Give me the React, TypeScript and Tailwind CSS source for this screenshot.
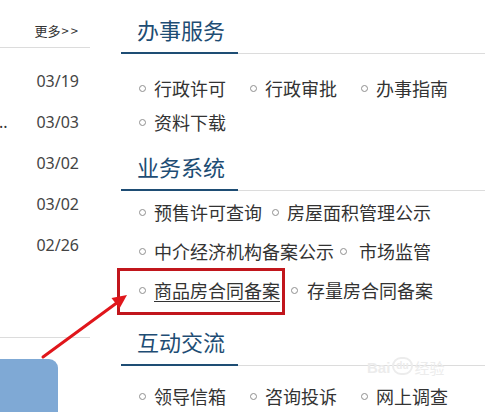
import React from "react";

const dates = ["03/19", "03/03", "03/02", "03/02", "02/26"];

function Heading({ title }: { title: string }) {
  return (
    <div className="flex h-[54px] items-end">
      <div className="h-full w-[117px] shrink-0 border-b-2 border-[#1e4d74] pl-[16px] pt-[13px] text-[22px] leading-[33px] text-[#1e4d74]">
        {title}
      </div>
      <div className="flex-1 border-b border-[#dcdcdc]" />
    </div>
  );
}

function Item({
  label,
  className = "",
  gap = "ml-[8px]",
  underline = false,
}: {
  label: string;
  className?: string;
  gap?: string;
  underline?: boolean;
}) {
  return (
    <span className={`inline-flex shrink-0 items-center ${className}`}>
      <span className="h-[7px] w-[7px] rounded-full border border-[#8f8f8f]" />
      <span className={`${gap} ${underline ? "underline decoration-1 underline-offset-[3px]" : ""}`}>
        {label}
      </span>
    </span>
  );
}

function FixedRow({ items }: { items: string[] }) {
  return (
    <div className="flex h-[34px] items-center pl-[18px] leading-[34px]">
      {items.map((it) => (
        <div key={it} className="w-[111px] shrink-0">
          <Item label={it} />
        </div>
      ))}
    </div>
  );
}

export default function App() {
  return (
    <div className="relative flex h-[412px] w-[485px] overflow-hidden bg-white font-['Microsoft_YaHei','Noto_Sans_CJK_SC','Noto_Sans',sans-serif] text-[#333]">
      {/* left news column */}
      <div className="flex w-[90px] shrink-0 flex-col">
        <div className="flex h-[54px] items-end justify-end border-b border-[#dcdcdc] pb-[8px] pr-[10px] text-[13px] leading-[17px]">
          更多<span className="ml-[1px] tracking-[2px]">&gt;&gt;</span>
        </div>
        <div className="pt-[13px]">
          {dates.map((d, i) => (
            <div
              key={i}
              className="flex h-[41px] items-center justify-between pr-[11px] font-['Noto_Sans',sans-serif] text-[16px] leading-[41px] text-[#444]"
            >
              <span className="-ml-[1px] text-[#333]">{i === 1 ? ".." : ""}</span>
              <span>{d}</span>
            </div>
          ))}
        </div>
        <div className="mt-[71px] border-t border-[#dcdcdc]" />
        <div className="mt-[21px] h-[60px] w-[58px] rounded-tr-[9px] bg-[#7fa9d5]" />
      </div>

      {/* right services column */}
      <div className="ml-[31px] flex-1 text-[18px]">
        <Heading title="办事服务" />
        <div className="pt-[15px]">
          <FixedRow items={["行政许可", "行政审批", "办事指南"]} />
          <FixedRow items={["资料下载"]} />
        </div>

        <Heading title="业务系统" />
        <div className="pl-[18px] pt-[2px]">
          <div className="flex h-[39px] items-center leading-[39px]">
            <Item label="预售许可查询" />
            <Item label="房屋面积管理公示" className="ml-[10px]" />
          </div>
          <div className="flex h-[39px] items-center leading-[39px]">
            <Item label="中介经济机构备案公示" />
            <Item label="市场监管" className="ml-[6px]" gap="ml-[12px]" />
          </div>
          <div className="flex h-[39px] items-center leading-[39px]">
            <Item label="商品房合同备案" underline />
            <Item label="存量房合同备案" className="ml-[11px]" gap="ml-[9px]" />
          </div>
        </div>

        <div className="mt-[2px]">
          <Heading title="互动交流" />
        </div>
        <div className="pt-[11px]">
          <FixedRow items={["领导信箱", "咨询投诉", "网上调查"]} />
        </div>
      </div>

      {/* annotation: red box + arrow */}
      <div className="absolute left-[117px] top-[268px] h-[47px] w-[168px] border-[3px] border-[#c1161c]" />
      <svg className="pointer-events-none absolute left-0 top-0" width="485" height="412">
        <line x1="43" y1="357" x2="118" y2="302" stroke="#e0161b" strokeWidth="3" strokeLinecap="round" />
        <polygon points="127,295 119.5,308.5 111.5,298" fill="#e0161b" />
      </svg>

      {/* watermark */}
      <div className="pointer-events-none absolute left-[367px] top-[357px] flex items-end gap-[2px] font-['Liberation_Sans',sans-serif] text-[15px] font-bold leading-none text-[#ececec]">
        <span>Bai</span>
        <span className="rounded-full border-2 border-[#ececec] px-[2px] text-[10px] leading-[14px]">du</span>
        <span className="font-['Noto_Sans_CJK_SC',sans-serif] text-[15px] font-normal">经验</span>
      </div>
    </div>
  );
}
